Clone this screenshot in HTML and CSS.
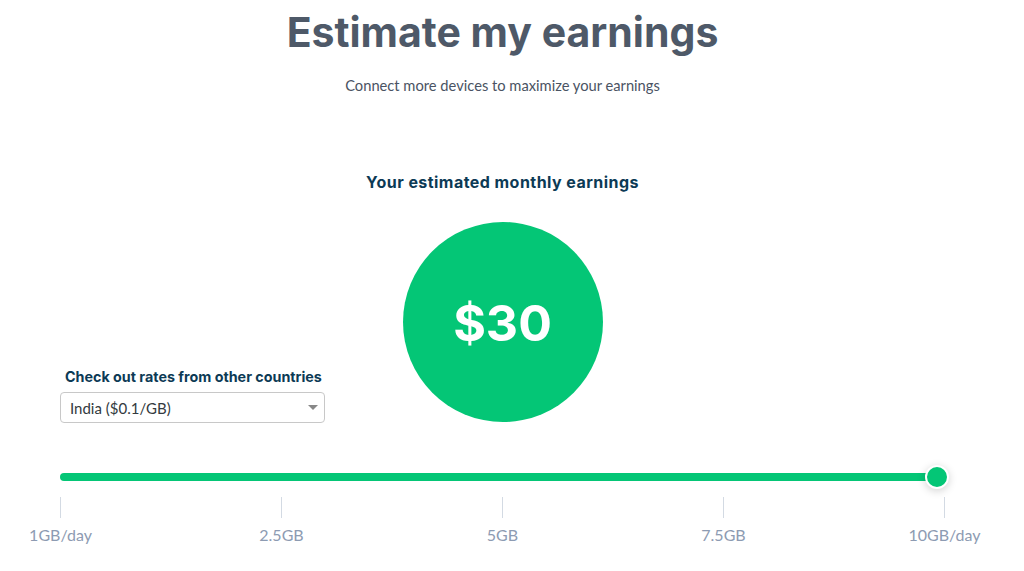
FILE: index.html
```html
<!DOCTYPE html>
<html lang="en">
<head>
<meta charset="utf-8">
<title>Estimate my earnings</title>
<link rel="stylesheet" href="styles.css">
</head>
<body>
<main class="page">
  <h1 class="title">Estimate my earnings</h1>
  <p class="subtitle">Connect more devices to maximize your earnings</p>
  <h2 class="est-label">Your estimated monthly earnings</h2>
  <div class="result-row">
    <div class="country">
      <div class="country-label">Check out rates from other countries</div>
      <div class="select">
        <span class="select-text">India ($0.1/GB)</span>
        <span class="select-arrow"></span>
      </div>
    </div>
    <div class="circle"><span class="amount">$30</span></div>
    <div class="spacer"></div>
  </div>
  <div class="slider">
    <div class="track">
      <span class="thumb"></span>
    </div>
    <div class="scale">
      <div class="mark"><span class="tick"></span><span class="mark-label">1GB/day</span></div>
      <div class="mark"><span class="tick"></span><span class="mark-label">2.5GB</span></div>
      <div class="mark"><span class="tick"></span><span class="mark-label">5GB</span></div>
      <div class="mark"><span class="tick"></span><span class="mark-label">7.5GB</span></div>
      <div class="mark"><span class="tick"></span><span class="mark-label">10GB/day</span></div>
    </div>
  </div>
</main>
</body>
</html>
```

FILE: styles.css
```css
* { box-sizing: border-box; }
html, body {
  margin: 0;
  background: #ffffff;
}
body {
  font-family: "Lato", "Noto Sans", sans-serif;
  overflow: hidden;
}
.page {
  width: 885px;
  margin-left: 60px;
  padding-top: 8px;
}
.title {
  margin: 0;
  text-align: center;
  font-family: "Inter", "Lato", sans-serif;
  font-size: 41px;
  line-height: 48px;
  font-weight: 700;
  color: #4e5968;
}
.subtitle {
  margin: 19px 0 0;
  text-align: center;
  font-size: 14.7px;
  line-height: 20px;
  color: #4a5363;
}
.est-label {
  margin: 77px 0 0;
  text-align: center;
  font-family: "Inter", "Lato", sans-serif;
  font-size: 16px;
  letter-spacing: 0.45px;
  line-height: 20px;
  font-weight: 700;
  color: #0c3a55;
}
.result-row {
  margin-top: 30px;
  display: grid;
  grid-template-columns: 1fr 200px 1fr;
  column-gap: 1px;
}
.country {
  align-self: end;
  display: flex;
  flex-direction: column;
  margin-bottom: -1px;
}
.country-label {
  font-family: "Inter", "Lato", sans-serif;
  font-size: 14.3px;
  line-height: 18px;
  font-weight: 700;
  color: #0c3a55;
  padding-left: 5px;
  margin-bottom: 6px;
  white-space: nowrap;
}
.select {
  width: 265px;
  height: 31px;
  border: 1px solid #c8c8c8;
  border-radius: 4px;
  display: flex;
  align-items: center;
  justify-content: space-between;
  padding: 0 6px 0 9px;
}
.select-text {
  font-size: 15px;
  color: #333a40;
}
.select-arrow {
  width: 0;
  height: 0;
  border-left: 5px solid transparent;
  border-right: 5px solid transparent;
  border-top: 5px solid #888888;
}
.circle {
  width: 200px;
  height: 200px;
  border-radius: 50%;
  background: #04c676;
  display: flex;
  align-items: center;
  justify-content: center;
}
.amount {
  color: #ffffff;
  font-family: "Inter", "Lato", sans-serif;
  font-weight: 700;
  font-size: 50px;
  line-height: 1;
  padding-top: 2px;
}
.slider {
  margin-top: 51px;
}
.track {
  position: relative;
  width: 877px;
  height: 8px;
  border-radius: 4px;
  background: #04c676;
}
.thumb {
  position: absolute;
  right: -12px;
  top: -8px;
  width: 24px;
  height: 24px;
  border-radius: 50%;
  background: #04c676;
  border: 2px solid #ffffff;
  box-shadow: 0 2px 8px rgba(0, 0, 0, 0.18);
}
.scale {
  margin-top: 16px;
  display: flex;
  justify-content: space-between;
}
.mark {
  width: 1px;
  display: flex;
  flex-direction: column;
  align-items: center;
}
.tick {
  width: 1px;
  height: 21px;
  background: #d3dae3;
}
.mark-label {
  margin-top: 7px;
  white-space: nowrap;
  font-size: 16px;
  line-height: 20px;
  color: #8d9bb2;
}
```
